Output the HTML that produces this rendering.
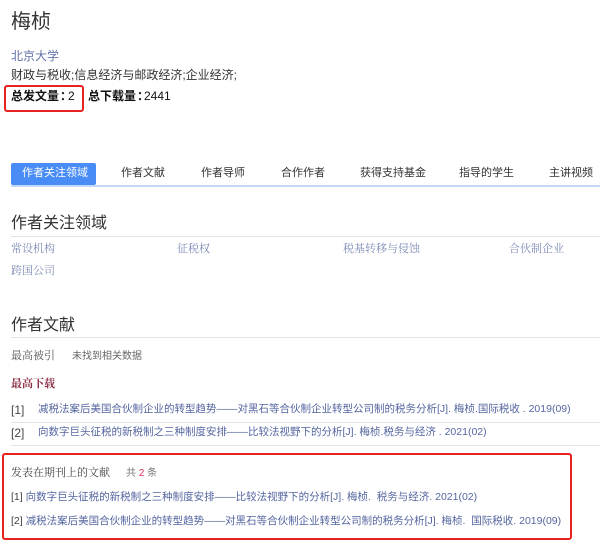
<!DOCTYPE html>
<html><head><meta charset="utf-8"><style>
body{margin:0;width:600px;height:553px;background:#fff;position:relative;overflow:hidden;font-family:"Liberation Sans","Noto Sans CJK SC",sans-serif;color:#333}
.a{position:absolute;white-space:nowrap;line-height:1}
.s{font-family:"Liberation Serif","Noto Serif CJK SC",serif}
.tab{position:absolute;top:168px;font-size:11px;color:#333;line-height:1}
.hl{position:absolute;left:11px;right:0;height:1px;background:#e3e3e3}
</style></head><body>
<div class="a" style="left:11px;top:12px;font-size:20px;color:#333">梅桢</div>
<div class="a" style="left:11px;top:50px;font-size:12px;color:#6273a8">北京大学</div>
<div class="a" style="left:11px;top:69px;font-size:12px">财政与税收;信息经济与邮政经济;企业经济;</div>
<div class="a" style="left:11px;top:90px;font-size:12px;font-weight:bold;color:#111">总发文量<span style="margin-left:1px">：</span></div>
<div class="a" style="left:68px;top:90px;font-size:12px;color:#111">2</div>
<div class="a" style="left:88px;top:90px;font-size:12px;font-weight:bold;color:#111">总下载量<span style="margin-left:1px">：</span></div>
<div class="a" style="left:144px;top:90px;font-size:12px;color:#111">2441</div>
<div style="position:absolute;left:4px;top:85px;width:76px;height:23px;border:2px solid #e8231f;border-radius:3px"></div>

<div style="position:absolute;left:11px;top:163px;width:85px;height:22px;background:#4a8cf6;border-radius:2px"></div>
<div style="position:absolute;left:11px;top:185px;right:0;height:2px;background:#c4d8f7"></div>
<div class="tab" style="left:22px;color:#fff">作者关注领域</div>
<div class="tab" style="left:121px">作者文献</div>
<div class="tab" style="left:201px">作者导师</div>
<div class="tab" style="left:281px">合作作者</div>
<div class="tab" style="left:360px">获得支持基金</div>
<div class="tab" style="left:459px">指导的学生</div>
<div class="tab" style="left:549px">主讲视频</div>

<div class="a" style="left:11px;top:216px;font-size:16px">作者关注领域</div>
<div class="hl" style="top:236px"></div>
<div class="a s" style="left:11px;top:244px;font-size:11px;color:#7d8bb5">常设机构</div>
<div class="a s" style="left:177px;top:244px;font-size:11px;color:#7d8bb5">征税权</div>
<div class="a s" style="left:343px;top:244px;font-size:11px;color:#7d8bb5">税基转移与侵蚀</div>
<div class="a s" style="left:509px;top:244px;font-size:11px;color:#7d8bb5">合伙制企业</div>
<div class="a s" style="left:11px;top:266px;font-size:11px;color:#7d8bb5">跨国公司</div>

<div class="a" style="left:11px;top:318px;font-size:16px">作者文献</div>
<div class="hl" style="top:337px"></div>
<div class="a s" style="left:11px;top:351px;font-size:11px;color:#555">最高被引</div>
<div class="a" style="left:72px;top:352px;font-size:10px;color:#666">未找到相关数据</div>
<div class="a s" style="left:11px;top:379px;font-size:11px;font-weight:bold;color:#8b2a40">最高下载</div>
<div class="a" style="left:11px;top:404px;font-size:12px;color:#444">[1]</div>
<div class="a" style="left:38px;top:404px;font-size:10.5px;color:#5566a0">减税法案后美国合伙制企业的转型趋势——对黑石等合伙制企业转型公司制的税务分析[J]. 梅桢.国际税收 . 2019(09)</div>
<div class="hl" style="top:422px"></div>
<div class="a" style="left:11px;top:427px;font-size:12px;color:#444">[2]</div>
<div class="a" style="left:38px;top:427px;font-size:10.5px;color:#5566a0">向数字巨头征税的新税制之三种制度安排——比较法视野下的分析[J]. 梅桢.税务与经济 . 2021(02)</div>
<div class="hl" style="top:445px"></div>

<div style="position:absolute;left:2px;top:453px;width:566px;height:83px;border:2px solid #e8231f;border-radius:3px"></div>
<div class="a s" style="left:11px;top:468px;font-size:11px;color:#444">发表在期刊上的文献</div>
<div class="a" style="left:126px;top:469px;font-size:10px;color:#777">共 <span style="color:#e0325a">2</span> 条</div>
<div class="a" style="left:11px;top:492px;font-size:10.5px;color:#5566a0"><span style="color:#444">[1]</span> 向数字巨头征税的新税制之三种制度安排——比较法视野下的分析[J]. 梅桢.&nbsp; 税务与经济. 2021(02)</div>
<div class="a" style="left:11px;top:516px;font-size:10.5px;color:#5566a0"><span style="color:#444">[2]</span> 减税法案后美国合伙制企业的转型趋势——对黑石等合伙制企业转型公司制的税务分析[J]. 梅桢.&nbsp; 国际税收. 2019(09)</div>
</body></html>
